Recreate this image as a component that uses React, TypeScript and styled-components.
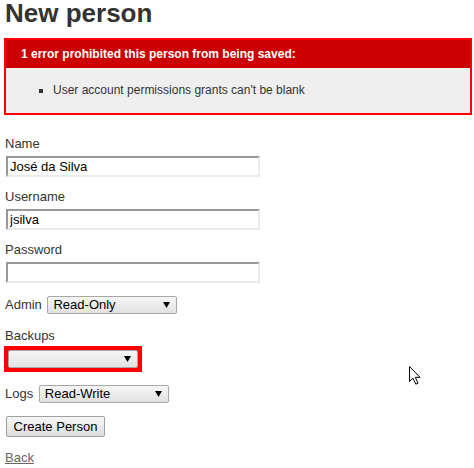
import React from 'react'
import styled, { createGlobalStyle } from 'styled-components'

const GlobalStyle = createGlobalStyle`
  body {
    margin: 0;
    background: #fff;
    color: #333;
    font-family: "Liberation Sans", Arial, Helvetica, sans-serif;
    font-size: 13px;
    line-height: 18px;
  }
`

const Page = styled('div')`
  position: relative;
  width: 474px;
  height: 468px;
  overflow: hidden;
  padding: 0 4px;
  box-sizing: border-box;
`

const Title = styled('h1')`
  margin: 0 0 12px 1px;
  font-size: 26px;
  line-height: 26px;
  font-weight: bold;
  color: #333;
`

const ErrorBox = styled('div')`
  width: 450px;
  border: 2px solid #f00;
  padding: 7px 7px 0;
  margin-bottom: 20px;
  background-color: #efefef;
`

const ErrorHeading = styled('h2')`
  margin: -7px -7px 0;
  padding: 5px 5px 5px 15px;
  font-size: 12px;
  line-height: 18px;
  font-weight: bold;
  background-color: #c00;
  color: #fff;
`

const ErrorList = styled('ul')`
  margin: 13px 0 14px;
  padding-left: 40px;
  li {
    font-size: 12px;
    line-height: 18px;
    list-style: square;
  }
`

const Field = styled('div')`
  display: flex;
  flex-direction: column;
  align-items: flex-start;
  margin-bottom: 11px;
`

const InlineField = styled('div')`
  display: flex;
  align-items: center;
  margin-bottom: 11px;
`

const Label = styled('label')`
  display: block;
  margin-left: 1px;
  height: 18px;
  line-height: 18px;
`

const StackedLabel = styled(Label)`
  margin-bottom: ${(p: { $gap?: number }) => p.$gap ?? 3}px;
`

const TextInput = styled('input')`
  box-sizing: border-box;
  width: 254px;
  height: 21px;
  margin: 0 0 0 2px;
  padding: 1px 2px;
  border-style: solid;
  border-width: 2px;
  border-color: #999 #eaeaea #eaeaea #999;
  font-family: "Liberation Sans", Arial, sans-serif;
  font-size: 13px;
  color: #000;
  background: #fff;
  outline: none;
`

const SelectWrap = styled('div')`
  position: relative;
  margin: 2px;
`

const SelectBox = styled('select')`
  appearance: none;
  box-sizing: border-box;
  display: block;
  width: 130px;
  height: 18px;
  margin: 0;
  padding: 0 16px 0 5px;
  border: 1px solid #a8a8a8;
  border-radius: 2px;
  background: linear-gradient(#f6f6f6, #e2e2e2);
  font-family: "Liberation Sans", Arial, sans-serif;
  font-size: 13px;
  line-height: 16px;
  color: #000;
  outline: none;
`

const Arrow = styled('svg')`
  position: absolute;
  right: 7px;
  top: 6px;
  pointer-events: none;
`

const ErrorWrap = styled('div')`
  display: table;
  padding: 2px;
  background-color: #f00;
`

const Button = styled('button')`
  box-sizing: border-box;
  margin: 0 0 12px 2px;
  width: 99px;
  height: 21px;
  padding: 0 6px;
  border: 1px solid #a0a0a0;
  border-radius: 2px;
  background: linear-gradient(#f6f6f6, #dedede);
  font-family: "Liberation Sans", Arial, sans-serif;
  font-size: 13px;
  color: #000;
`

const BackLink = styled('a')`
  display: block;
  margin-left: 1px;
  color: #666;
  text-decoration: underline;
`

const Cursor = styled('svg')`
  position: absolute;
  left: 409px;
  top: 366px;
`

const Select = ({ value }: { value: string }) => (
  <SelectWrap>
    <SelectBox defaultValue={value}>
      <option value="">{''}</option>
      <option value="Read-Only">Read-Only</option>
      <option value="Read-Write">Read-Write</option>
    </SelectBox>
    <Arrow width="7" height="6" viewBox="0 0 7 6">
      <polygon points="0,0 7,0 3.5,6" fill="#000" />
    </Arrow>
  </SelectWrap>
)

const App = () => {
  return (
    <Page>
      <GlobalStyle />
      <Title>New person</Title>

      <ErrorBox>
        <ErrorHeading>1 error prohibited this person from being saved:</ErrorHeading>
        <ErrorList>
          <li>User account permissions grants can't be blank</li>
        </ErrorList>
      </ErrorBox>

      <Field>
        <StackedLabel>Name</StackedLabel>
        <TextInput type="text" defaultValue="José da Silva" />
      </Field>
      <Field>
        <StackedLabel>Username</StackedLabel>
        <TextInput type="text" defaultValue="jsilva" />
      </Field>
      <Field>
        <StackedLabel>Password</StackedLabel>
        <TextInput type="password" />
      </Field>

      <InlineField>
        <Label>Admin</Label>
        <span>&nbsp;</span>
        <Select value="Read-Only" />
      </InlineField>

      <Field>
        <StackedLabel $gap={1}>Backups</StackedLabel>
        <ErrorWrap>
          <Select value="" />
        </ErrorWrap>
      </Field>

      <InlineField>
        <Label>Logs</Label>
        <span>&nbsp;</span>
        <Select value="Read-Write" />
      </InlineField>

      <Button type="button">Create Person</Button>
      <BackLink href="#">Back</BackLink>

      <Cursor width="12" height="19" viewBox="0 0 12 19">
        <polygon
          points="0.5,0.5 0.5,15.5 4,12.2 6.8,18.2 9,17.2 6.3,11.3 11,11.3"
          fill="#fff"
          stroke="#000"
          strokeWidth="1"
          strokeLinejoin="miter"
        />
      </Cursor>
    </Page>
  )
}

export default App
